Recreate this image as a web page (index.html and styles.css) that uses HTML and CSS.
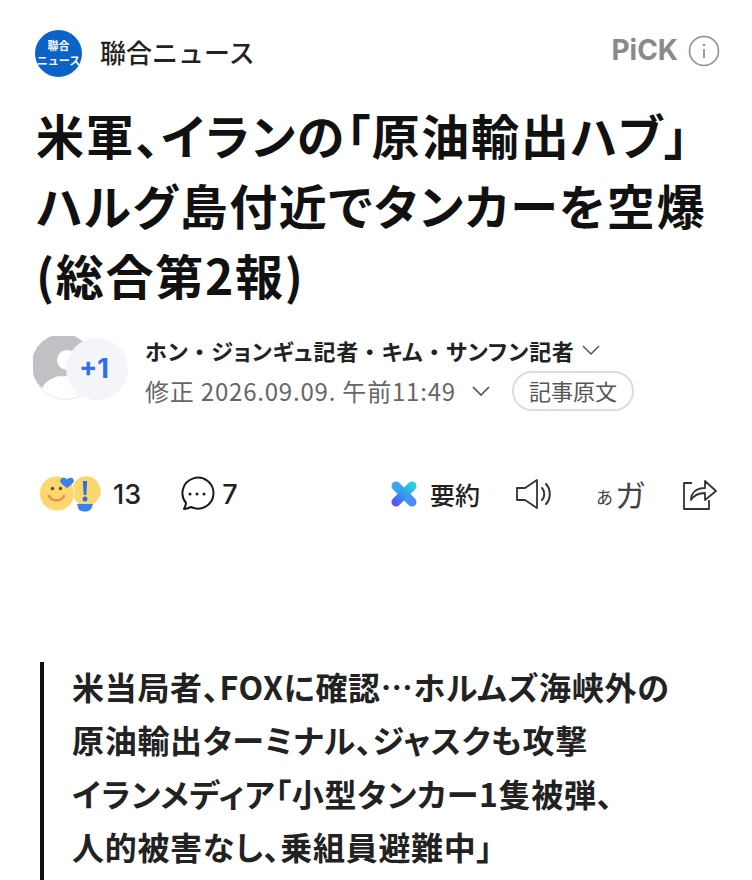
FILE: index.html
```html
<!DOCTYPE html>
<html lang="ja">
<head>
<meta charset="utf-8">
<title>米軍、イランの「原油輸出ハブ」</title>
<link rel="stylesheet" href="styles.css">
</head>
<body>
<header class="top">
  <div class="brand">
    <div class="logo"><span>聯合</span><span>ニュース</span></div>
    <span class="brand-name">聯合ニュース</span>
  </div>
  <div class="pick">
    <span class="pick-text">PiCK</span>
    <svg class="pick-info" width="32" height="32" viewBox="0 0 32 32"><circle cx="16" cy="16" r="14.5" fill="none" stroke="#8f8f8f" stroke-width="1.6"/><circle cx="16" cy="10" r="1.3" fill="#8f8f8f"/><path d="M16 14v9" stroke="#8f8f8f" stroke-width="1.8"/></svg>
  </div>
</header>
<h1 class="title">米軍、イランの「原油輸出ハブ」<br>ハルグ島付近でタンカーを空爆<br>(総合第2報)</h1>
<section class="byline">
  <div class="avatars">
    <svg class="avatar" width="64" height="64" viewBox="0 0 64 64"><circle cx="32" cy="32" r="31.5" fill="#fff" stroke="#e6e6e6"/><path d="M9 52A31 31 0 1 1 55 11L44 36C40 40 30 41 26 40C18 42 12 46 9 52Z" fill="#bfc1c4"/><circle cx="34" cy="24" r="10" fill="#fff"/></svg>
    <div class="more">+1</div>
  </div>
  <div class="meta">
    <div class="authors"><span>ホン<span class="dot">・</span>ジョンギュ記者<span class="dot">・</span>キム<span class="dot">・</span>サンフン記者</span>
      <svg width="20" height="12" viewBox="0 0 20 12"><path d="M2 2l8 8 8-8" fill="none" stroke="#555" stroke-width="1.5"/></svg></div>
    <div class="dates"><span class="date">修正 2026.09.09. 午前11:49</span>
      <svg class="date-caret" width="20" height="12" viewBox="0 0 20 12"><path d="M2 2l8 8 8-8" fill="none" stroke="#555" stroke-width="1.7"/></svg>
      <span class="origin">記事原文</span></div>
  </div>
</section>
<section class="actions">
  <div class="stats">
    <svg class="reactions" width="64" height="36" viewBox="0 0 64 36">
      <path d="M48 0a15 15 0 0 1 8 27.500c-1 .8-2 1.500-2 2.500H41c0-3-2-4-4-6A15 15 0 0 1 48 0z" fill="#fdd76d"/>
      <path d="M39 28h16l-1 3c-1 3-3 4.500-6 4.500h-2c-3 0-6-1.500-6-4.500z" fill="#3b7ff0"/>
      <path d="M44.800 5h4.400l-.9 14h-2.600z" fill="#2f6fe8"/><circle cx="47" cy="23" r="2.500" fill="#2f6fe8"/>
      <circle cx="19" cy="17.500" r="17.500" fill="#fdd76d" stroke="#fff" stroke-width=".8"/>
      <circle cx="14.500" cy="12.500" r="1.700" fill="#6b4a1e"/><circle cx="22.500" cy="12.500" r="1.700" fill="#6b4a1e"/>
      <path d="M11 20c3 6 12 6 15 0" fill="none" stroke="#f08a4b" stroke-width="2.400" stroke-linecap="round"/>
      <path d="M29 12c-4-3-8-5.500-6.500-8.500 1-2 4.500-2.500 6.500 0 2-2.500 5.500-2 6.500 0C37 6.500 33 9 29 12z" fill="#3b7ff0"/>
    </svg>
    <span class="count">13</span>
    <svg class="comment" width="36" height="36" viewBox="0 0 36 36"><path d="M5 33c1-2 2-4 2-6a15.500 15.500 0 1 1 5 4c-2 1-5 2-7 2z" fill="none" stroke="#1a1a1a" stroke-width="2" stroke-linejoin="round"/><circle cx="11" cy="18" r="1.500" fill="#1a1a1a"/><circle cx="18" cy="18" r="1.500" fill="#1a1a1a"/><circle cx="25" cy="18" r="1.500" fill="#1a1a1a"/></svg>
    <span class="count">7</span>
  </div>
  <div class="tools">
    <div class="summary">
      <svg width="28" height="28" viewBox="0 0 28 28"><defs><linearGradient id="xa" gradientUnits="userSpaceOnUse" x1="5" y1="5" x2="23" y2="23"><stop offset="0" stop-color="#3aa8f2"/><stop offset="1" stop-color="#4a8cf5"/></linearGradient><linearGradient id="xb" gradientUnits="userSpaceOnUse" x1="23" y1="5" x2="5" y2="23"><stop offset="0" stop-color="#27d3dc"/><stop offset=".5" stop-color="#2f9cf0"/><stop offset="1" stop-color="#5a55f5"/></linearGradient></defs><path d="M6 6l16 16" stroke="url(#xa)" stroke-width="9" stroke-linecap="round"/><path d="M22 6L6 22" stroke="url(#xb)" stroke-width="9" stroke-linecap="round"/></svg>
      <span>要約</span>
    </div>
    <svg class="speaker" width="38" height="32" viewBox="0 0 38 32"><path d="M2 10h8l12-8v28l-12-8H2z" fill="none" stroke="#333" stroke-width="1.800" stroke-linejoin="round"/><path d="M27 10c3 3 3 9 0 12M31 6c5 5 5 15 0 20" fill="none" stroke="#333" stroke-width="2" stroke-linecap="round"/></svg>
    <div class="font-size"><span class="fs-small">あ</span><span class="fs-large">ガ</span></div>
    <svg class="share" width="36" height="34" viewBox="0 0 36 34"><path d="M10 6H2v26h25v-9" fill="none" stroke="#333" stroke-width="1.800" stroke-linejoin="round"/><path d="M9 23c0-7 5-12 14-12V4l11 10-11 9v-7c-6 0-11 2-14 7z" fill="none" stroke="#333" stroke-width="1.800" stroke-linejoin="round"/></svg>
  </div>
</section>
<blockquote class="lead">
  <p>米当局者、FOXに確認…ホルムズ海峡外の</p>
  <p>原油輸出ターミナル、ジャスクも攻撃</p>
  <p>イランメディア「小型タンカー1隻被弾、</p>
  <p>人的被害なし、乗組員避難中」</p>
</blockquote>
</body>
</html>
```
FILE: styles.css
```css
* { box-sizing: border-box; }
html, body { margin: 0; padding: 0; }
body {
  width: 752px;
  height: 880px;
  overflow: hidden;
  background: #fff;
  color: #111;
  font-family: "Noto Sans CJK JP", "Noto Sans", sans-serif;
}
.top {
  display: flex;
  justify-content: space-between;
  align-items: center;
  padding: 30px 32px 0 35px;
  height: 76px;
}
.brand { display: flex; align-items: center; gap: 18px; }
.logo {
  width: 47px;
  height: 47px;
  border-radius: 50%;
  background: #0b63c9;
  color: #fff;
  display: flex;
  flex-direction: column;
  align-items: center;
  justify-content: center;
  font-size: 11px;
  font-weight: 700;
  line-height: 15px;
}
.brand-name { font-size: 26px; font-weight: 500; color: #222; margin-bottom: 4px; }
.pick { display: flex; align-items: center; gap: 10px; margin-bottom: 4px; }
.pick-text { font: 700 28px "Inter", sans-serif; color: #8a8a8a; margin-bottom: 2px; }
.title {
  margin: 23px 0 0;
  padding: 0 36px;
  font-size: 48px;
  font-weight: 700;
  letter-spacing: 1.7px;
  line-height: 70px;
  color: #111;
  font-feature-settings: "palt";
  white-space: nowrap;
}
.byline { display: flex; align-items: flex-start; gap: 17px; margin-top: 27px; padding-left: 33px; }
.avatars { display: flex; }
.avatar { flex: none; }
.more {
  width: 62px;
  height: 62px;
  margin: 2px 0 0 -31px;
  padding-right: 6px;
  border-radius: 50%;
  background: #f3f5f8;
  color: #2f6fe8;
  font: 700 27px/62px "Inter", sans-serif;
  text-align: center;
  position: relative;
}
.meta { display: flex; flex-direction: column; gap: 4px; margin-top: -3px; }
.authors { display: flex; align-items: center; gap: 6px; font-size: 22px; font-weight: 700; letter-spacing: .7px; line-height: 34px; color: #222; font-feature-settings: "palt"; }
.dot { font-feature-settings: normal; }
.dates { display: flex; align-items: center; font-size: 24px; letter-spacing: .8px; line-height: 40px; color: #666; }
.date-caret { margin: 0 21px 0 15px; }
.origin {
  height: 40px;
  padding: 0 15px;
  border: 2px solid #ddd;
  border-radius: 20px;
  font-size: 22px;
  letter-spacing: 0;
  line-height: 34px;
  color: #555;
}
.actions { display: flex; justify-content: space-between; align-items: center; margin-top: 65px; padding: 0 34px 0 38px; }
.stats { display: flex; align-items: center; }
.count { font: 500 27px "Inter", sans-serif; color: #222; }
.stats .count { margin-left: 11px; }
.comment { margin-left: 38px; }
.stats .count:last-child { margin-left: 7px; }
.tools { display: flex; align-items: center; }
.summary { display: flex; align-items: center; gap: 12px; font-size: 25px; font-weight: 500; color: #222; }
.speaker { margin-left: 35px; }
.font-size { margin-left: 43px; display: flex; align-items: flex-end; color: #444; }
.fs-small { font-size: 17px; line-height: 30px; margin-right: 2px; }
.fs-large { font-size: 31px; line-height: 36px; }
.share { margin-left: 36px; }
.lead {
  display: flow-root;
  margin: 150px 0 0 40px;
  padding: 0 0 0 28px;
  border-left: 4px solid #111;
  height: 218px;
  font-size: 32px;
  font-weight: 700;
  letter-spacing: .7px;
  color: #222;
  font-feature-settings: "palt";
}
.lead p { margin: 0; line-height: 53.3px; white-space: nowrap; }
.lead p:first-child { margin-top: -2px; }
```
